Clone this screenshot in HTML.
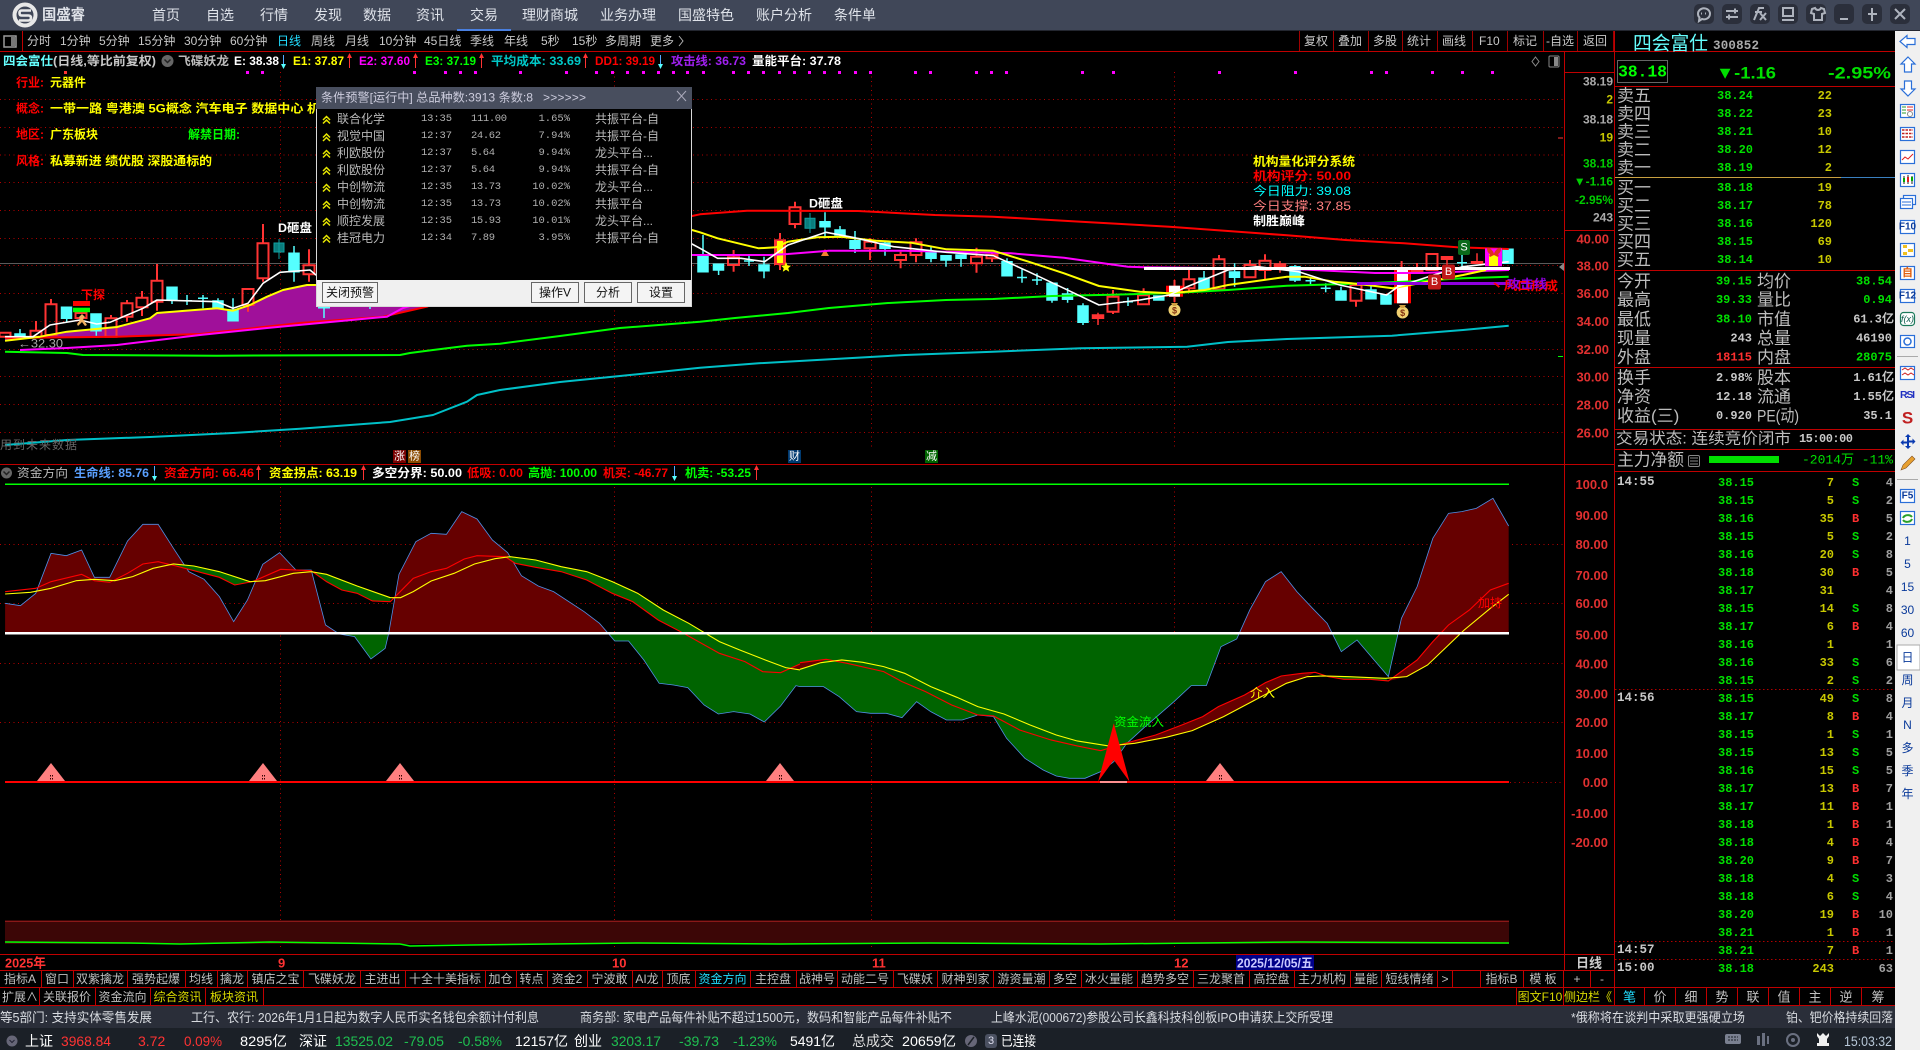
<!DOCTYPE html>
<html><head><meta charset="utf-8"><title>国盛睿</title>
<style>
html,body{margin:0;padding:0;background:#000;width:1920px;height:1050px;overflow:hidden}
svg{display:block;position:absolute;left:0;top:0}
text{font-family:"Liberation Sans","WenQuanYi Zen Hei","Noto Sans CJK SC",sans-serif;font-size:12px;dominant-baseline:central;fill:#c0c0c0}
.m{font-family:"Liberation Mono","WenQuanYi Zen Hei",monospace;font-weight:bold}
.b{font-weight:bold}
.e{text-anchor:end}.t{text-anchor:middle}
.nav{font-size:14px;fill:#dfe3ea}
.l{font-size:17px;fill:#bdbdbd}
.g{fill:#00e000}.y{fill:#c8c800}.r{fill:#ff3030}.w{fill:#c8c8c8}
.ax{font-size:13px;fill:#e03030;font-weight:bold;text-anchor:end}
.tk{font-size:13px;fill:#d8dbe0}
.st{font-size:14px}
.p{fill:#b8b8b8;font-size:12px}
.pm{font-family:"Liberation Mono",monospace;font-size:10.5px;fill:#b0b0b0}
.sb{fill:#0a3a9a;font-size:12px;text-anchor:middle}
.bx{fill:#fff;stroke:#3a7fe0;stroke-width:1}
.col{position:absolute;font:bold 12px/18px "Liberation Mono",monospace;white-space:pre;top:474px}
</style></head><body>
<svg width="1920" height="1050" viewBox="0 0 1920 1050">
<defs>
<linearGradient id="fz" gradientUnits="userSpaceOnUse" x1="0" y1="0" x2="0" y2="1020"><stop offset=".5088" stop-color="#660000"/><stop offset=".5088" stop-color="#006400"/></linearGradient>
</defs>
<rect width="1920" height="1050" fill="#000"/>

<!-- top bar -->
<rect width="1920" height="30" fill="#404758"/>
<rect y="30" width="1920" height="1" fill="#23262f"/>
<rect x="457" y="29" width="54" height="2" fill="#4a80e0"/>
<circle cx="25" cy="15" r="10.5" fill="none" stroke="#e8e8e8" stroke-width="4"/>
<path d="M31 10.5H21.5Q19.500 10.500 19.500 13T21.500 15.500H28.500Q31 15.500 31 18T28.500 20.500H19" fill="none" stroke="#e8e8e8" stroke-width="2.600"/>
<text x="42" y="15" class="b" style="font-size:15px;fill:#dfe2e8" textLength="43" lengthAdjust="spacingAndGlyphs">国盛睿</text>
<text x="152" y="15" class="nav">首页</text><text x="206" y="15" class="nav">自选</text><text x="260" y="15" class="nav">行情</text><text x="314" y="15" class="nav">发现</text><text x="363" y="15" class="nav">数据</text><text x="416" y="15" class="nav">资讯</text><text x="470" y="15" class="nav">交易</text><text x="522" y="15" class="nav">理财商城</text><text x="600" y="15" class="nav">业务办理</text><text x="678" y="15" class="nav">国盛特色</text><text x="756" y="15" class="nav">账户分析</text><text x="834" y="15" class="nav">条件单</text>
<!-- top-right buttons -->
<g fill="#2b2f3b"><rect x="1694" y="4" width="20" height="20" rx="5"/><rect x="1722" y="4" width="20" height="20" rx="5"/><rect x="1750" y="4" width="20" height="20" rx="5"/><rect x="1778" y="4" width="20" height="20" rx="5"/><rect x="1806" y="4" width="20" height="20" rx="5"/><rect x="1834" y="4" width="20" height="20" rx="5"/><rect x="1862" y="4" width="20" height="20" rx="5"/><rect x="1890" y="4" width="20" height="20" rx="5"/></g>
<g fill="none" stroke="#aeb3bd" stroke-width="2">
<path d="M1698 14a6 5.500 0 1 1 4 5l-3 2 .5-3.500Q1698 16 1698 14Z"/><path d="M1701 13.500h1M1705 13.500h1" />
<path d="M1726 11h12M1726 17h12M1735 8.500v5M1729 14.500v5"/>
<path d="M1754 20l5-12h5M1755 12h7M1760 13l6 7M1766 13l-6 7"/>
<path d="M1783 8h10v8h-10zM1782 20h12"/>
<path d="M1812 9l3-1q1 2 3 2t3-2l3 1 1 4-3 1v6h-8v-6l-3-1z"/>
<path d="M1840 19h8"/>
<path d="M1868 14h4v-6M1872 14v6h-1M1872 14h5"/>
<path d="M1895 9l10 10M1905 9l-10 10"/>
</g>

<!-- period toolbar -->
<rect x="4" y="36" width="12" height="11" fill="none" stroke="#9a9a9a" stroke-width="1.500"/><rect x="11" y="37" width="4" height="9" fill="#777"/>
<rect x="22" y="31" width="1" height="20" fill="#c00000"/>
<g fill="#b8b8b8">
<text x="27" y="41" class="w">分时</text><text x="60" y="41" class="w">1分钟</text><text x="99" y="41" class="w">5分钟</text><text x="138" y="41" class="w">15分钟</text><text x="184" y="41" class="w">30分钟</text><text x="230" y="41" class="w">60分钟</text><text x="277" y="41" style="fill:#22ddff">日线</text><text x="311" y="41" class="w">周线</text><text x="345" y="41" class="w">月线</text><text x="379" y="41" class="w">10分钟</text><text x="424" y="41" class="w">45日线</text><text x="470" y="41" class="w">季线</text><text x="504" y="41" class="w">年线</text><text x="541" y="41" class="w">5秒</text><text x="572" y="41" class="w">15秒</text><text x="605" y="41" class="w">多周期</text><text x="650" y="41" class="w">更多</text></g>
<path d="M679 36l4 5-4 5" fill="none" stroke="#b0b0b0"/>
<path d="M1299.500 31v20M1333.500 31v20M1368.500 31v20M1402.500 31v20M1437.500 31v20M1472.500 31v20M1507.500 31v20M1543.500 31v20M1577.500 31v20M1613.500 31v20" stroke="#a00000"/>
<text x="1304" y="41" class="w">复权</text><text x="1338" y="41" class="w">叠加</text><text x="1373" y="41" class="w">多股</text><text x="1407" y="41" class="w">统计</text><text x="1442" y="41" class="w">画线</text><text x="1479" y="41" class="w">F10</text><text x="1513" y="41" class="w">标记</text><text x="1546" y="41" class="w">-自选</text><text x="1583" y="41" class="w">返回</text>
<rect x="0" y="51" width="1895" height="1" fill="#c00000"/>

<!-- top panel grid -->
<g stroke="#b00000" stroke-dasharray="1 3.500" fill="none">
<path d="M0 99.500H1564M0 127.500H1564M0 155H1564M0 182.500H1564M0 210.500H1564M0 238.500H1564M0 265.500H1564M0 293.500H1564M0 321.500H1564M0 349.500H1564M0 376.500H1564M0 404.500H1564M0 432.500H1564"/>
<path d="M280.500 72V450M614.500 72V450M871.500 72V450M1174.500 72V450"/>
<path d="M0 544.500H1564M0 603.500H1564M0 663.500H1564M0 722.500H1564M1510 782.500H1564"/>
<path d="M280.500 487V950M614.500 487V950M871.500 487V950M1174.500 487V950"/>
</g>
<rect x="0" y="263" width="1564" height="1" fill="#5a5a5a"/>

<!-- magenta dots -->
<g fill="#f0f">
<rect x="64" y="71" width="3" height="3" fill="#f33"/><rect x="246" y="71" width="3" height="3"/><rect x="261" y="71" width="3" height="3"/><rect x="413" y="71" width="3" height="3"/><rect x="444" y="71" width="3" height="3"/><rect x="459" y="71" width="3" height="3"/><rect x="474" y="71" width="3" height="3"/><rect x="519" y="71" width="3" height="3"/><rect x="565" y="71" width="3" height="3"/><rect x="595" y="71" width="3" height="3"/><rect x="611" y="71" width="3" height="3"/><rect x="626" y="71" width="3" height="3"/><rect x="642" y="71" width="3" height="3"/><rect x="657" y="71" width="3" height="3"/><rect x="672" y="71" width="3" height="3"/><rect x="686" y="71" width="3" height="3"/>
<rect x="702" y="71" width="3" height="3"/><rect x="732" y="71" width="3" height="3"/><rect x="747" y="71" width="3" height="3"/><rect x="762" y="71" width="3" height="3"/><rect x="778" y="71" width="3" height="3"/><rect x="793" y="71" width="3" height="3"/><rect x="808" y="71" width="3" height="3"/><rect x="823" y="71" width="3" height="3"/><rect x="838" y="71" width="3" height="3"/><rect x="854" y="71" width="3" height="3"/><rect x="869" y="71" width="3" height="3"/><rect x="914" y="71" width="3" height="3"/><rect x="929" y="71" width="3" height="3"/><rect x="975" y="71" width="3" height="3"/><rect x="990" y="71" width="3" height="3"/><rect x="1005" y="71" width="3" height="3"/><rect x="1081" y="71" width="3" height="3"/><rect x="1112" y="71" width="3" height="3"/><rect x="1218" y="71" width="3" height="3"/><rect x="1294" y="71" width="3" height="3"/><rect x="1370" y="71" width="3" height="3"/><rect x="1385" y="71" width="3" height="3"/><rect x="1431" y="71" width="3" height="3"/><rect x="1461" y="71" width="3" height="3"/><rect x="1491" y="71" width="3" height="3"/>
</g>

<!-- purple fill -->
<polygon fill="#a0109a" points="5,340.700 40,336.700 67,331.700 117,327 150,318.300 157,313 217,308.300 233,310.700 250,305 267,296.700 283,290 307,285 316,285 360,285 428,306.700 383,316.700 300,323 200,334 117,336.700 5,338"/>

<!-- candles: red hollow -->
<path fill="none" stroke="#f33" stroke-width="2" d="M-.5 332.700H10.500V336.700H-.5ZM36 321V330.700M30.500 330.700H41.500V336.700H30.500ZM51 299V304.300M45.500 304.300H56.500V335H45.500ZM81 309V313M75.500 313H86.500V318H75.500ZM111 315V318.300M105.500 318.300H116.500V336.700H105.500ZM127 300V303.300M127 316.700V321.700M121.500 303.300H132.500V316.700H121.500ZM142 291V297.700M142 307.300V316M136.500 297.700H147.500V307.300H136.500ZM157 264V280.700M157 301.700V310.700M151.500 280.700H162.500V301.700H151.500ZM248 305V311.700M242.500 289H253.500V305H242.500ZM263 224V243.300M263 278.300V281.700M257.500 243.300H268.500V278.300H257.500ZM309 249.300V265.300M309 274.300V281.700M303.500 265.300H314.500V274.300H303.500ZM733.600 250V257.300M733.600 265V271.700M728 257.300H739V265H728ZM795 201.700V207.300M795 224V228.300M789.500 207.300H800.500V224H789.500ZM870 238.300V241.700M870 248.300V260M864.500 241.700H875.500V248.300H864.500ZM900.600 251.700V255M900.600 260V268.300M895 255H906V260H895ZM916 238.300V242.300M916 255V262.300M910.500 242.300H921.500V255H910.500ZM976.500 247.700V256.700M976.500 263.300V272.700M971 256.700H982V263.300H971ZM992 253V255M992 258.300V262M986.500 255H997.500V258.300H986.500ZM1113 290V296.700M1113 311.700V314M1107.500 296.700H1118.500V311.700H1107.500ZM1143.600 288.300V295.300M1138 295.300H1149V304.300H1138ZM1189 270V279.300M1189 288.300V293M1183.500 279.300H1194.500V288.300H1183.500ZM1219 255V259.300M1213.500 259.300H1224.500V289.300H1213.500ZM1250 260V265M1244.500 265H1255.500V277.300H1244.500ZM1265 254.300V260.700M1265 270V280M1259.500 260.700H1270.500V270H1259.500ZM1356 300.700V306.700M1350.500 285H1361.500V300.700H1350.500ZM1417 263V271M1411.500 271H1422.500V273H1411.500ZM1426.500 254H1437.500V270H1426.500ZM1174.500 280V286M1174.500 297V302M1401.600 261V270"/>
<path fill="#f33" stroke="#f33" stroke-width="1.500" d="M1092.500 315H1103.500V318.300H1092.500ZM1098 312.700V325M1274.500 264H1285.500V267.300H1274.500ZM1280 261V272.700M1441.500 256.700H1452.500V259.300H1441.500ZM1447 256V270M1471.500 261.700H1482.500V263.300H1471.500ZM1477 253.300V263"/>
<!-- candles: cyan -->
<path fill="#55ffff" stroke="#55ffff" stroke-width="1.500" d="M20 329V334M15 334H25V338H15ZM66.700 318.300V322M61.500 307.300H71.500V318.300H61.500ZM96.300 330.700V335.700M91 314H101V330.700H91ZM172 299.300V304M167 287.300H177V299.300H167ZM187 295V305M182 300.700H192M203 295V308.300M198 298.300H208M218 298.300V301M213 301H223V308.300H213ZM233 298.300V310M228 310H238V320.700H228ZM294 246V253.300M294 271.700V281.700M289 253.300H299V271.700H289ZM324 307V318M318 307.700H330M370 306V309M703 235V256.700M698 256.700H708V271.700H698ZM718.600 270V275M713.500 264.300H723.500V270H713.500ZM749 256V266M744 261H754M764 256.700V265M764 270.700V278.300M759 265H769V270.700H759ZM825 212.300V221.700M825 226.700V238.300M820 221.700H830V226.700H820ZM840 226V230M840 235V238M835 230H845V235H835ZM855 231V240.700M855 248.300V253M850 240.700H860V248.300H850ZM885 241.700V243.300M885 248.300V255.700M880 243.300H890V248.300H880ZM931 246.700V251.700M931 258.300V262.300M926 251.700H936V258.300H926ZM946 260V266.700M941 255.700H951V260H941ZM961 258.300V266.700M956 255H966V258.300H956ZM1007 258.300V261.700M1002 261.700H1012V275.700H1002ZM1022 269.300V282.700M1017 277.500H1027M1037 273.300V285M1032 280H1042M1052 300V302.700M1047 283.300H1057V300H1047ZM1067.600 288V294M1067.600 299.300V302.700M1062.500 294H1072.500V299.300H1062.500ZM1083 303.300V306M1083 322.300V325M1078 306H1088V322.300H1078ZM1128 297.300V306M1123 301.700H1133M1153.800 296H1163.800V300H1153.800ZM1204 271V278.300M1199 278.300H1209V290H1199ZM1234.600 263.300V272M1234.600 277.300V286.700M1229.500 272H1239.500V277.300H1229.500ZM1295 265V266.700M1295 280V282M1290 266.700H1300V280H1290ZM1310.500 277.300V285M1305.500 280.700H1315.500M1325.700 283.300V292.300M1320.700 288.300H1330.700M1341 286.700V291M1336 291H1346V300H1336ZM1371 285V290M1366 290H1376V298.700H1366ZM1381 295H1391V304H1381ZM1462 250V266.700M1457 262.700H1467M1503 249.300H1513V263.300H1503Z"/>
<path fill="#0a7c7c" stroke="#0fa0a0" d="M279 239V259M274 243H284V252H274ZM810 213V233M805 218.300H815V228.300H805Z"/>

<!-- big special candles -->
<rect x="1166" y="285.700" width="17" height="11" fill="#f00"/><rect x="1169" y="285.700" width="11" height="11" fill="#fff"/>
<rect x="1394" y="269.300" width="17" height="34" fill="#f00"/><rect x="1397" y="269.300" width="11" height="34" fill="#fff"/>
<rect x="774" y="239.300" width="12" height="25.700" fill="#f33"/><rect x="777" y="241" width="6" height="22" fill="#ff0"/>
<path d="M780 233V239M780 265V270" stroke="#f33" stroke-width="2"/>
<path d="M786 262l1.500 3.500 3.500.3-2.700 2.300.9 3.600-3.200-2-3.200 2 .9-3.600-2.700-2.300 3.500-.3z" fill="#ff0"/>
<path d="M825 249l4 7h-8z" fill="#f08030"/>

<!-- MAs -->
<g fill="none" stroke-linejoin="round">
<polyline stroke="#f00" stroke-width="2" points="5,338 117,336.700 200,334 300,323 383,316.700 427,306.700 500,270 560,240 620,225 692,216 700,214.300 747,210.700 858,211 935,215 993,216.700 1081,221.700 1169.500,226.700 1228,231 1287,235.300 1345.500,240 1404,243.300 1457,247.300 1508.700,249"/>
<polyline stroke="#f0f" stroke-width="2" points="20,350 67,348 117,345 200,335 267,328 333,321.700 387,316.700 403,308 500,280 600,262 692,255 770,255 788,254 829,250.700 905,250.700 1011,253.300 1064,257.700 1128,266.700 1146,267.300 1293,269 1375,273 1421,273 1509,270"/>
<polyline stroke="#0f0" stroke-width="2" points="5,351.700 67,353 83,355 217,355.700 400,355 410,353 433,350 467,345.700 500,343.700 560,336 620,328 700,321.700 735,318 788,313 829,308 888,303 946,300 993,299 1052,296 1111,294.700 1169.500,293.300 1228,290 1287,285.700 1345.500,284 1404,281.700 1463,278.300 1508.700,276.700"/>
<polyline stroke="#00c0c8" stroke-width="2" points="5,445 67,440 150,437 233,433 300,428.700 390,422 433,415 467,401.700 477,395 500,390 560,382 620,376 700,367.700 758.700,363.300 817,360 905,355 993,351.700 1081,348.300 1187,346.700 1228,342 1287,339 1392,335.700 1463,330 1508.700,325.700"/>
<polyline stroke="#ff0" stroke-width="2" points="5,340.700 40,336.700 67,331.700 117,327 150,318.300 157,313 217,308.300 233,310.700 250,305 267,296.700 283,290 307,285 316,285 692,230 700,232.300 717.600,238.300 758.700,248.300 776,247.300 788,241.700 817,237.300 841,236.700 876,240.700 911,242.700 946.500,249.300 993,250.700 1028.600,261.700 1064,273.300 1099,286 1140,291.700 1169.500,293.300 1204.700,290 1228,285 1287,276.700 1304.500,276.700 1334,281.700 1351.400,283.300 1375,286 1392.500,288.300 1463,275 1486,270"/>
<polyline stroke="#fff" stroke-width="1.600" points="5,336.700 33,336.700 50,325 80,320 96.700,324 110,322.300 143,308.300 157,300 217,301.700 233,308.300 248,303.300 263,283.300 280,272.300 310,270 316,275 692,244 700,248.300 717.600,258.300 741,258.300 764.600,261.700 788,245 826,232.300 852.600,237.300 893.600,246.700 946.500,252.300 993.400,255.700 1028.600,271.700 1064,288.300 1099,305 1140,300 1169.500,295 1187,286.700 1228,270 1257.500,266.700 1298.600,271.700 1339.700,285 1386.600,295 1398,286.700 1433.600,275 1463,266.700 1508.700,261.700"/>
</g>
<rect x="1144" y="267" width="366" height="3" fill="#fff"/>
<rect x="1357" y="282" width="153" height="3" fill="#9000e0"/>
<rect x="1485" y="248.300" width="17" height="18" fill="#f0f"/><rect x="1489" y="254" width="9" height="12" fill="#ff0"/>
<path d="M1494 254c-1-4-5-7-7-6 0 3 1 5 3 6-1 1-1 2 0 3l4-2 4 2c1-1 1-2 0-3 2-1 3-3 3-6-2-1-6 2-7 6z" fill="#e03020"/>
<!-- tags -->
<rect x="1458" y="240" width="12" height="15" rx="2" fill="#0a6a1a"/><text x="1464" y="247.500" class="t" style="fill:#fff;font-size:11px">S</text>
<rect x="1442" y="264.500" width="13" height="15" rx="2" fill="#c01818"/><text x="1448.500" y="272" class="t" style="fill:#fff;font-size:11px">B</text>
<rect x="1428" y="274.500" width="13" height="15" rx="2" fill="#c01818"/><text x="1434.500" y="282" class="t" style="fill:#fff;font-size:11px">B</text>
<circle cx="1174.500" cy="310" r="6" fill="#f0d070"/><path d="M1171 303h7l-2 3h-3z" fill="#d0a040"/><text x="1174.500" y="310.500" class="t" style="fill:#803010;font-size:9px;font-weight:bold">$</text>
<circle cx="1402.600" cy="312.500" r="6" fill="#f0d070"/><path d="M1399 305h7l-2 3h-3z" fill="#d0a040"/><text x="1402.600" y="313" class="t" style="fill:#803010;font-size:9px;font-weight:bold">$</text>
<text x="278" y="228" class="b" style="fill:#fff" textLength="34" lengthAdjust="spacingAndGlyphs">D砸盘</text>
<text x="809" y="203.500" class="b" style="fill:#fff" textLength="34" lengthAdjust="spacingAndGlyphs">D砸盘</text>
<text x="81" y="295" class="b" style="fill:#f00">下探</text>
<rect x="73" y="301" width="17" height="5" fill="#f00"/><rect x="73" y="307.700" width="17" height="4.500" fill="#0f0"/>
<path d="M82 314l3 3-2 2 4 6-2 1-3-4-4 4-1-2 3-4-1-3z" fill="#f0b060"/>
<text x="18" y="343.500" style="fill:#aaa" textLength="45" lengthAdjust="spacingAndGlyphs">←32.30</text>
<text x="0" y="445" style="fill:#666" textLength="77" lengthAdjust="spacing">用到未来数据</text>
<rect x="393" y="450" width="13" height="13" fill="#7a0000"/><text x="399.500" y="456.500" class="t" style="fill:#fff;font-size:11px">涨</text>
<rect x="408" y="450" width="13" height="13" fill="#8a4a00"/><text x="414.500" y="456.500" class="t" style="fill:#fff;font-size:11px">榜</text>
<rect x="788" y="450" width="13" height="13" fill="#003a70"/><text x="794.500" y="456.500" class="t" style="fill:#fff;font-size:11px">财</text>
<rect x="925" y="450" width="13" height="13" fill="#006400"/><text x="931.500" y="456.500" class="t" style="fill:#fff;font-size:11px">减</text>
<text x="1490" y="286" class="b" style="fill:#f00" textLength="68" lengthAdjust="spacingAndGlyphs">丶风口形成</text>
<text x="1507" y="284" class="b" style="fill:#9000e0" textLength="40" lengthAdjust="spacingAndGlyphs">攻击线</text>

<!-- left info -->
<text x="16" y="82.500" class="b" style="fill:#f00">行业:</text><text x="50" y="82.500" class="b" style="fill:#ff0">元器件</text>
<text x="16" y="108.500" class="b" style="fill:#f00">概念:</text><text x="50" y="108.500" class="b" style="fill:#ff0" textLength="270" lengthAdjust="spacingAndGlyphs">一带一路 粤港澳 5G概念 汽车电子 数据中心 机</text>
<text x="16" y="134.500" class="b" style="fill:#f00">地区:</text><text x="50" y="134.500" class="b" style="fill:#ff0">广东板块</text>
<text x="188" y="134.500" class="b" style="fill:#0f0">解禁日期:</text>
<text x="16" y="161" class="b" style="fill:#f00">风格:</text><text x="50" y="161" class="b" style="fill:#ff0" textLength="162" lengthAdjust="spacingAndGlyphs">私募新进 绩优股 深股通标的</text>

<!-- top info row -->
<text x="3" y="61" class="b" textLength="50" lengthAdjust="spacingAndGlyphs" style="fill:#66ffff">四会富仕</text>
<text x="53" y="61" class="b" textLength="103" lengthAdjust="spacingAndGlyphs" style="fill:#c8c8c8">(日线,等比前复权)</text>
<circle cx="167.500" cy="61" r="6" fill="#666"/><path d="M164.500 59.500l3 3 3-3" fill="none" stroke="#222" stroke-width="1.500"/>
<text x="178" y="61" class="b" textLength="51" lengthAdjust="spacingAndGlyphs" style="fill:#bbb">飞碟妖龙</text>
<text x="234" y="61" class="b" textLength="45" lengthAdjust="spacingAndGlyphs" style="fill:#fff">E: 38.38</text>
<path d="M283.500 55v11" stroke="#5af" /><path d="M281 64h5l-2.500 5z" fill="#5ff"/>
<text x="293" y="61" class="b" textLength="51" lengthAdjust="spacingAndGlyphs" style="fill:#ff0">E1: 37.87</text>
<path d="M349.500 57v11" stroke="#f33"/><path d="M347 58h5l-2.500-5z" fill="#f33"/>
<text x="359" y="61" class="b" textLength="51" lengthAdjust="spacingAndGlyphs" style="fill:#f0f">E2: 37.60</text>
<path d="M415.500 57v11" stroke="#f33"/><path d="M413 58h5l-2.500-5z" fill="#f33"/>
<text x="425" y="61" class="b" textLength="51" lengthAdjust="spacingAndGlyphs" style="fill:#0f0">E3: 37.19</text>
<path d="M481.500 57v11" stroke="#f33"/><path d="M479 58h5l-2.500-5z" fill="#f33"/>
<text x="491" y="61" class="b" textLength="90" lengthAdjust="spacingAndGlyphs" style="fill:#00c8c8">平均成本: 33.69</text>
<path d="M585.500 57v11" stroke="#f33"/><path d="M583 58h5l-2.500-5z" fill="#f33"/>
<text x="595" y="61" class="b" textLength="60" lengthAdjust="spacingAndGlyphs" style="fill:#f00">DD1: 39.19</text>
<path d="M660.500 55v11" stroke="#5af"/><path d="M658 64h5l-2.500 5z" fill="#5ff"/>
<text x="671" y="61" class="b" textLength="75" lengthAdjust="spacingAndGlyphs" style="fill:#a020f0">攻击线: 36.73</text>
<text x="752" y="61" class="b" textLength="89" lengthAdjust="spacingAndGlyphs" style="fill:#fff">量能平台: 37.78</text>
<path d="M1535.500 57l3.500 4.500-3.500 4.500-3.500-4.500z" fill="none" stroke="#888"/>
<rect x="1549" y="56" width="10" height="11" rx="1" fill="none" stroke="#888"/><rect x="1554" y="57" width="4" height="9" fill="#888"/>
<text x="1253" y="161.500" class="b" style="fill:#ff0" textLength="102" lengthAdjust="spacingAndGlyphs">机构量化评分系统</text>
<text x="1253" y="176" class="b" style="fill:#f00" textLength="98" lengthAdjust="spacingAndGlyphs">机构评分:  50.00</text>
<text x="1253" y="191" style="fill:#0ff" textLength="98" lengthAdjust="spacingAndGlyphs">今日阻力:  39.08</text>
<text x="1253" y="206" style="fill:#ff8080" textLength="98" lengthAdjust="spacingAndGlyphs">今日支撑:  37.85</text>
<text x="1253" y="221" class="b" style="fill:#fff" textLength="52" lengthAdjust="spacingAndGlyphs">制胜巅峰</text>

<!-- top axis -->
<rect x="1564" y="51" width="1" height="919" fill="#c00000"/>
<rect x="1564" y="72" width="50" height="1" fill="#c00000"/><rect x="1564" y="230" width="50" height="1" fill="#c00000"/>
<g style="font-size:13px">
<text x="1613" y="81.500" class="e b" style="fill:#aaa">38.19</text><text x="1613" y="99.500" class="e b" style="fill:#c8c800">2</text><text x="1613" y="119.500" class="e b" style="fill:#aaa">38.18</text><text x="1613" y="137.500" class="e b" style="fill:#c8c800">19</text><text x="1613" y="163.500" class="e b" style="fill:#0c0">38.18</text><text x="1613" y="181.500" class="e b" style="fill:#0c0">▼-1.16</text><text x="1613" y="200" class="e b" style="fill:#0c0">-2.95%</text><text x="1613" y="217.500" class="e b" style="fill:#aaa">243</text></g>
<text x="1609" y="239" class="ax">40.00</text><text x="1609" y="266" class="ax">38.00</text><text x="1609" y="293.500" class="ax">36.00</text><text x="1609" y="321.500" class="ax">34.00</text><text x="1609" y="349.500" class="ax">32.00</text><text x="1609" y="377" class="ax">30.00</text><text x="1609" y="405" class="ax">28.00</text><text x="1609" y="433" class="ax">26.00</text>
<path d="M1558 138h5" stroke="#f33"/><path d="M1558 356.500h5" stroke="#0f0"/><path d="M1564 263l-5 4 5 4z" fill="#888"/>

<!-- panel separator -->
<rect x="0" y="464" width="1614" height="1" fill="#c00000"/>

<!-- lower title -->
<circle cx="6.500" cy="473" r="5.500" fill="#666"/><path d="M3.500 471.500l3 3 3-3" fill="none" stroke="#222" stroke-width="1.500"/>
<text x="17" y="473" textLength="51" lengthAdjust="spacingAndGlyphs" style="fill:#bbb">资金方向</text>
<text x="74" y="473" class="b" textLength="75" lengthAdjust="spacingAndGlyphs" style="fill:#5aa0ff">生命线: 85.76</text>
<path d="M154.500 466v11" stroke="#5af"/><path d="M152 476h5l-2.500 5z" fill="#5ff"/>
<text x="164" y="473" class="b" textLength="90" lengthAdjust="spacingAndGlyphs" style="fill:#f00">资金方向: 66.46</text>
<path d="M258.500 469v11" stroke="#f33"/><path d="M256 470h5l-2.500-5z" fill="#f33"/>
<text x="269" y="473" class="b" textLength="88" lengthAdjust="spacingAndGlyphs" style="fill:#ff0">资金拐点: 63.19</text>
<path d="M363.500 469v11" stroke="#f33"/><path d="M361 470h5l-2.500-5z" fill="#f33"/>
<text x="372" y="473" class="b" textLength="90" lengthAdjust="spacingAndGlyphs" style="fill:#fff">多空分界: 50.00</text>
<text x="467" y="473" class="b" textLength="56" lengthAdjust="spacingAndGlyphs" style="fill:#f00">低吸: 0.00</text>
<text x="528" y="473" class="b" textLength="69" lengthAdjust="spacingAndGlyphs" style="fill:#0f0">高抛: 100.00</text>
<text x="603" y="473" class="b" textLength="65" lengthAdjust="spacingAndGlyphs" style="fill:#f00">机买: -46.77</text>
<path d="M674.500 466v11" stroke="#5af"/><path d="M672 476h5l-2.500 5z" fill="#5ff"/>
<text x="685" y="473" class="b" textLength="66" lengthAdjust="spacingAndGlyphs" style="fill:#0f0">机卖: -53.25</text>
<path d="M756.500 469v11" stroke="#f33"/><path d="M754 470h5l-2.500-5z" fill="#f33"/>

<!-- lower chart (coords from sampled scale) -->
<g transform="translate(0 460) scale(.5102 .3333)">
<polygon fill="url(#fz)" points="10,519 10,430 40,437 70,400 100,280 130,287 160,270 185,352 215,352 250,243 280,193 310,193 340,265 370,335 400,358 430,410 458,485 485,420 515,313 548,278 580,330 610,330 638,495 665,522 695,530 727,597 755,565 762,519 782,343 815,245 845,220 875,223 905,155 935,177 965,240 995,278 1022,347 1055,378 1085,395 1145,455 1175,490 1205,543 1232,543 1262,600 1292,670 1320,675 1348,683 1380,735 1408,762 1438,755 1470,762 1498,786 1530,738 1560,677 1568,680 1568,519"/>
<polyline fill="none" stroke="#5090e8" vector-effect="non-scaling-stroke" stroke-width=".8" points="10,430 40,437 70,400 100,280 130,287 160,270 185,352 215,352 250,243 280,193 310,193 340,265 370,335 400,358 430,410 458,485 485,420 515,313 548,278 580,330 610,330 638,495 665,522 695,530 727,597 755,565 762,519 782,343 815,245 845,220 875,223 905,155 935,177 965,240 995,278 1022,347 1055,378 1085,395 1145,455 1175,490 1205,543 1232,543 1262,600 1292,670 1320,675 1348,683 1380,735 1408,762 1438,755 1470,762 1498,786 1530,738 1560,677 1568,680"/>
<!-- green bands -->
<g fill="#006400">
<polygon points="185,362 215,367 225,362 185,358"/>
<polygon points="340,312 380,318 430,335 490,365 460,375 430,352 400,340 345,318"/>
<polygon points="610,335 640,343 700,378 765,413 765,425 730,423 700,400 670,390 640,365"/>
<polygon points="990,290 1050,300 1100,320 1150,335 1200,365 1250,400 1300,450 1350,490 1410,545 1450,570 1500,600 1540,623 1495,635 1460,605 1410,580 1340,520 1290,480 1240,425 1200,400 1150,360 1100,335 1050,322 1010,310"/>
</g>
<polygon fill="#660000" points="1545,630 1568,612 1568,630"/>
<g fill="none">
<polyline stroke="#f00" stroke-width="1.100" vector-effect="non-scaling-stroke" points="10,395 70,385 100,365 160,343 185,362 215,367 250,340 280,312 310,305 345,318 400,340 430,352 460,375 495,365 550,328 610,332 640,365 670,390 700,400 730,423 765,425 810,355 845,335 875,325 910,297 935,287 990,290 1010,310 1050,322 1100,335 1150,360 1200,400 1240,425 1290,480 1340,520 1410,580 1460,605 1495,635 1530,638 1568,612"/>
<polyline stroke="#ff0" stroke-width="1.100" vector-effect="non-scaling-stroke" points="10,402 60,397 100,385 150,362 185,358 225,362 260,350 300,325 340,312 380,318 430,335 490,365 520,362 575,340 610,335 640,343 700,378 765,413 785,413 810,395 845,363 890,340 930,312 970,296 1000,290 1050,300 1100,320 1150,335 1200,365 1250,400 1300,450 1350,490 1410,545 1450,570 1500,600 1540,623 1568,630"/>
</g>
</g>
<g transform="translate(800 460) scale(.523 .3333)">
<polygon fill="url(#fz)" points="0,519 0,680 45,680 75,710 108,755 135,760 165,760 195,773 223,725 250,755 280,780 310,780 340,765 370,770 395,835 430,895 465,930 490,948 515,955 545,955 575,935 600,905 625,850 660,800 715,725 748,677 777,677 805,560 835,537 860,450 890,365 920,335 950,395 980,445 1008,490 1035,575 1065,540 1125,650 1150,475 1180,380 1210,235 1240,160 1265,155 1293,145 1325,115 1355,198 1355,519"/>
<polyline fill="none" stroke="#5090e8" stroke-width=".8" vector-effect="non-scaling-stroke" points="0,680 45,680 75,710 108,755 135,760 165,760 195,773 223,725 250,755 280,780 310,780 340,765 370,770 395,835 430,895 465,930 490,948 515,955 545,955 575,935 600,905 625,850 660,800 715,725 748,677 777,677 805,560 835,537 860,450 890,365 920,335 950,395 980,445 1008,490 1035,575 1065,540 1125,650 1150,475 1180,380 1210,235 1240,160 1265,155 1293,145 1325,115 1355,198"/>
<polygon fill="#660000" points="0,608 50,598 40,608 0,628"/>
<polygon fill="#660000" points="610,855 680,825 730,795 770,770 800,740 850,705 890,668 920,648 960,640 985,637 970,650 930,670 870,720 810,770 750,812 700,832 640,850 610,860"/>
<polygon fill="#006400" points="985,637 1010,650 1040,658 1090,658 1125,663 1120,655 1050,650 1000,648"/>
<polygon fill="#660000" points="1125,663 1180,600 1210,545 1240,495 1280,450 1320,390 1355,370 1355,403 1320,445 1270,510 1240,555 1200,615 1160,650"/>
<polyline fill="none" stroke="#f00" stroke-width="1.100" vector-effect="non-scaling-stroke" points="0,608 50,598 90,610 160,635 195,665 240,695 290,735 340,765 370,768 420,810 480,840 530,858 575,872 610,855 680,825 730,795 770,770 800,740 850,705 890,668 920,648 960,640 985,637 1010,650 1040,658 1090,658 1125,663 1180,600 1210,545 1240,495 1280,450 1320,390 1355,370"/>
<polyline fill="none" stroke="#ff0" stroke-width="1.100" vector-effect="non-scaling-stroke" points="0,628 40,608 80,600 120,607 160,620 200,640 250,680 300,712 340,740 390,762 440,795 490,825 530,843 590,858 640,850 700,832 750,812 810,770 870,720 930,670 970,650 1000,648 1050,650 1120,655 1160,650 1200,615 1240,555 1270,510 1320,445 1355,403"/>
<polygon fill="#f00" points="570,965 600,790 630,965 600,900"/>
</g>
<rect x="5" y="483.500" width="1504" height="1.500" fill="#0f0"/>
<rect x="5" y="632" width="1504" height="2.500" fill="#fff"/>
<rect x="5" y="781" width="1504" height="2" fill="#f00"/>
<rect x="1100" y="781" width="27" height="2" fill="#ff9090"/>
<g fill="#ff8080">
<polygon points="51,763 37,781 65,781"/><polygon points="263,763 249,781 277,781"/><polygon points="400,763 386,781 414,781"/><polygon points="780,763 766,781 794,781"/><polygon points="1220,763 1206,781 1234,781"/></g>
<g fill="#300"><rect x="50" y="775" width="1" height="1.500"/><rect x="52" y="775" width="1" height="1.500"/><rect x="50" y="778" width="1" height="1.500"/><rect x="52" y="778" width="1" height="1.500"/><rect x="262" y="775" width="1" height="1.500"/><rect x="264" y="775" width="1" height="1.500"/><rect x="262" y="778" width="1" height="1.500"/><rect x="264" y="778" width="1" height="1.500"/><rect x="399" y="775" width="1" height="1.500"/><rect x="401" y="775" width="1" height="1.500"/><rect x="399" y="778" width="1" height="1.500"/><rect x="401" y="778" width="1" height="1.500"/><rect x="779" y="775" width="1" height="1.500"/><rect x="781" y="775" width="1" height="1.500"/><rect x="779" y="778" width="1" height="1.500"/><rect x="781" y="778" width="1" height="1.500"/><rect x="1219" y="775" width="1" height="1.500"/><rect x="1221" y="775" width="1" height="1.500"/><rect x="1219" y="778" width="1" height="1.500"/><rect x="1221" y="778" width="1" height="1.500"/></g>
<text x="1114" y="722" style="fill:#0f0" textLength="50" lengthAdjust="spacingAndGlyphs">资金流入</text>
<text x="1250" y="693" style="fill:#ff0" textLength="25" lengthAdjust="spacingAndGlyphs">介入</text>
<text x="1478" y="603" style="fill:#f00" textLength="24" lengthAdjust="spacingAndGlyphs">加持</text>

<!-- lower axis -->
<text x="1608" y="484.500" class="ax">100.0</text><text x="1608" y="515.500" class="ax">90.00</text><text x="1608" y="544.500" class="ax">80.00</text><text x="1608" y="575.500" class="ax">70.00</text><text x="1608" y="603.500" class="ax">60.00</text><text x="1608" y="635" class="ax">50.00</text><text x="1608" y="664" class="ax">40.00</text><text x="1608" y="694" class="ax">30.00</text><text x="1608" y="722.500" class="ax">20.00</text><text x="1608" y="753.500" class="ax">10.00</text><text x="1608" y="782.500" class="ax">0.00</text><text x="1608" y="813.500" class="ax">-10.00</text><text x="1608" y="842.500" class="ax">-20.00</text>

<!-- volume-like band -->
<rect x="5" y="920" width="1504" height="24" fill="#3c0606"/>
<rect x="5" y="921" width="1504" height="1" fill="#8a1818"/>
<polyline fill="none" stroke="#0f0" stroke-width="1.500" points="5,942 130,943 180,944 270,942 400,944 410,946 470,945 640,943 780,944 930,943 1100,944 1300,942 1509,943"/>

<!-- date row -->
<rect x="0" y="954" width="1614" height="1" fill="#c00000"/>
<text x="5" y="963" class="b" style="fill:#f33;font-size:13px" textLength="41" lengthAdjust="spacingAndGlyphs">2025年</text>
<text x="278" y="963" class="b" style="fill:#f33;font-size:13px">9</text><text x="612" y="963" class="b" style="fill:#f33;font-size:13px">10</text><text x="872" y="963" class="b" style="fill:#f33;font-size:13px">11</text><text x="1174" y="963" class="b" style="fill:#f33;font-size:13px">12</text>
<rect x="1236" y="955" width="78" height="15" fill="#000088"/>
<text x="1237" y="963" class="b" style="fill:#c8c8ff;font-size:13px" textLength="76" lengthAdjust="spacingAndGlyphs">2025/12/05/五</text>
<text x="1589" y="963" class="t b" style="fill:#ccc;font-size:13px">日线</text>

<!-- tab rows -->
<rect x="0" y="970" width="1614" height="1" fill="#c00000"/><rect x="0" y="987" width="1614" height="1" fill="#c00000"/><rect x="0" y="1005" width="1895" height="1" fill="#c00000"/>
<path stroke="#c00000" d="M41.500 970v17M73.500 970v17M127.500 970v17M185.500 970v17M217.500 970v17M247.500 970v17M303.500 970v17M360.500 970v17M405.500 970v17M485.500 970v17M516.500 970v17M547.500 970v17M587.500 970v17M632.500 970v17M662.500 970v17M695.500 970v17M750.500 970v17M796.500 970v17M837.500 970v17M893.500 970v17M937.500 970v17M993.500 970v17M1049.500 970v17M1081.500 970v17M1137.500 970v17M1193.500 970v17M1249.500 970v17M1294.500 970v17M1350.500 970v17M1381.500 970v17M1437.500 970v17M1452.500 970v17M1480.500 970v17M1523.500 970v17M1563.500 970v17M1590.500 970v17M39.500 987v18M95.500 987v18M150.500 987v18M205.500 987v18M263.500 987v18M1516.500 987v18M1563.500 987v18"/>
<g class="tabs">
<text x="20" y="979" class="t">指标A</text><text x="57" y="979" class="t">窗口</text><text x="100" y="979" class="t">双紫擒龙</text><text x="156" y="979" class="t">强势起爆</text><text x="201" y="979" class="t">均线</text><text x="232" y="979" class="t">擒龙</text><text x="275.500" y="979" class="t">镇店之宝</text><text x="332" y="979" class="t">飞碟妖龙</text><text x="382.500" y="979" class="t">主进出</text><text x="445" y="979" class="t">十全十美指标</text><text x="500.500" y="979" class="t">加仓</text><text x="531.500" y="979" class="t">转点</text><text x="567" y="979" class="t">资金2</text><text x="609.500" y="979" class="t">宁波敢</text><text x="647" y="979" class="t">AI龙</text><text x="678.500" y="979" class="t">顶底</text><text x="722.500" y="979" class="t" style="fill:#22ddff">资金方向</text><text x="773" y="979" class="t">主控盘</text><text x="817" y="979" class="t">战神号</text><text x="865" y="979" class="t">动能二号</text><text x="915" y="979" class="t">飞碟妖</text><text x="965.500" y="979" class="t">财神到家</text><text x="1021.500" y="979" class="t">游资量潮</text><text x="1065" y="979" class="t">多空</text><text x="1109" y="979" class="t">冰火量能</text><text x="1165" y="979" class="t">趋势多空</text><text x="1221" y="979" class="t">三龙聚首</text><text x="1271.500" y="979" class="t">高控盘</text><text x="1322" y="979" class="t">主力机构</text><text x="1366" y="979" class="t">量能</text><text x="1409.500" y="979" class="t">短线情绪</text><text x="1445" y="979" class="t">&gt;</text><text x="1501.500" y="979" class="t">指标B</text><text x="1543" y="979" class="t">模 板</text><text x="1577" y="979" class="t">+</text><text x="1602" y="979" class="t">-</text>
<text x="20" y="997" class="t">扩展∧</text><text x="67" y="997" class="t">关联报价</text><text x="122.500" y="997" class="t">资金流向</text><text x="177.500" y="997" class="t" style="fill:#d8d800">综合资讯</text><text x="234" y="997" class="t" style="fill:#d8d800">板块资讯</text><text x="1540" y="997" class="t" style="fill:#d8d800">图文F10</text><text x="1588" y="997" class="t" style="fill:#d8d800">侧边栏《</text>
</g>

<!-- ticker & status -->
<rect x="0" y="1006" width="1895" height="22" fill="#2a2e39"/>
<rect x="0" y="1028" width="1895" height="22" fill="#1b2027"/>
<text x="0" y="1017.500" class="tk" textLength="152" lengthAdjust="spacingAndGlyphs">等5部门: 支持实体零售发展</text>
<text x="191" y="1017.500" class="tk" textLength="348" lengthAdjust="spacingAndGlyphs">工行、农行: 2026年1月1日起为数字人民币实名钱包余额计付利息</text>
<text x="580" y="1017.500" class="tk" textLength="372" lengthAdjust="spacingAndGlyphs">商务部: 家电产品每件补贴不超过1500元，数码和智能产品每件补贴不</text>
<text x="991" y="1017.500" class="tk" textLength="342" lengthAdjust="spacingAndGlyphs">上峰水泥(000672)参股公司长鑫科技科创板IPO申请获上交所受理</text>
<text x="1571" y="1017.500" class="tk" textLength="174" lengthAdjust="spacingAndGlyphs">*俄称将在谈判中采取更强硬立场</text>
<text x="1786" y="1017.500" class="tk" textLength="107" lengthAdjust="spacingAndGlyphs">铂、钯价格持续回落</text>

<circle cx="12" cy="1041" r="5.500" fill="#667"/><path d="M9.500 1040l2.500 2.500 2.500-2.500" fill="none" stroke="#223"/>
<g>
<text x="25" y="1041" class="st" style="fill:#fff">上证</text><text x="61" y="1041" class="st" style="fill:#f33" textLength="50" lengthAdjust="spacingAndGlyphs">3968.84</text><text x="138" y="1041" class="st" style="fill:#f33">3.72</text><text x="184" y="1041" class="st" style="fill:#f33" textLength="38" lengthAdjust="spacingAndGlyphs">0.09%</text><text x="240" y="1041" class="st" style="fill:#fff" textLength="47" lengthAdjust="spacingAndGlyphs">8295亿</text>
<text x="299" y="1041" class="st" style="fill:#fff">深证</text><text x="335" y="1041" class="st" style="fill:#1fbf50" textLength="58" lengthAdjust="spacingAndGlyphs">13525.02</text><text x="404" y="1041" class="st" style="fill:#1fbf50" textLength="40" lengthAdjust="spacingAndGlyphs">-79.05</text><text x="458" y="1041" class="st" style="fill:#1fbf50" textLength="44" lengthAdjust="spacingAndGlyphs">-0.58%</text><text x="515" y="1041" class="st" style="fill:#fff" textLength="53" lengthAdjust="spacingAndGlyphs">12157亿</text>
<text x="574" y="1041" class="st" style="fill:#fff">创业</text><text x="611" y="1041" class="st" style="fill:#1fbf50" textLength="50" lengthAdjust="spacingAndGlyphs">3203.17</text><text x="679" y="1041" class="st" style="fill:#1fbf50" textLength="40" lengthAdjust="spacingAndGlyphs">-39.73</text><text x="733" y="1041" class="st" style="fill:#1fbf50" textLength="44" lengthAdjust="spacingAndGlyphs">-1.23%</text><text x="790" y="1041" class="st" style="fill:#fff" textLength="45" lengthAdjust="spacingAndGlyphs">5491亿</text>
<text x="852" y="1041" class="st" style="fill:#ddd">总成交</text><text x="902" y="1041" class="st" style="fill:#fff" textLength="54" lengthAdjust="spacingAndGlyphs">20659亿</text>
</g>
<circle cx="971" cy="1041" r="6" fill="#667"/><path d="M968 1045l6-8" stroke="#1b2027" stroke-width="1.500"/>
<rect x="985" y="1034" width="12" height="14" rx="3" fill="#4a5060"/><text x="991" y="1041" class="t" style="fill:#dde;font-size:11px">3</text>
<text x="1001" y="1041" class="st" style="fill:#fff" textLength="35" lengthAdjust="spacingAndGlyphs">已连接</text>
<!-- status icons -->
<rect x="1725" y="1034" width="16" height="10" rx="2" fill="#7a8090"/><path d="M1728 1037h10M1728 1040h10" stroke="#1b2027" stroke-dasharray="2 1"/>
<path d="M1757 1036h3v9h-3zM1762 1033h3v13h-3zM1767 1036h2v8h-2z" fill="#6a7080"/>
<circle cx="1793" cy="1040" r="6" fill="none" stroke="#6a7080" stroke-width="2"/><circle cx="1793" cy="1040" r="2" fill="#6a7080"/>
<path d="M1817 1033l3 3 3-3 3 3 3-3v3l-2 3v4h2v3h-12v-3h2v-4l-2-3z" fill="#f0f0f0"/>
<text x="1844" y="1041" class="st" style="fill:#b8c8d8" textLength="48" lengthAdjust="spacingAndGlyphs">15:03:32</text>

<!-- right quote panel -->
<rect x="1614" y="31" width="1" height="974" fill="#c00000"/>
<text x="1633" y="44" style="font-size:19px;fill:#66ffff" textLength="75" lengthAdjust="spacingAndGlyphs">四会富仕</text>
<text x="1713" y="46" class="m" style="fill:#aaa;font-size:12.500px" textLength="46">300852</text>
<rect x="1617.500" y="60.500" width="50" height="22" fill="none" stroke="#666"/>
<text x="1618" y="72" class="m" style="fill:#0f0;font-size:16.500px" textLength="49">38.18</text>
<text x="1716" y="73" class="b" style="fill:#00e000;font-size:17px" textLength="60" lengthAdjust="spacingAndGlyphs">▼-1.16</text>
<text x="1891" y="73" class="e b" style="fill:#00e000;font-size:17px" textLength="63" lengthAdjust="spacingAndGlyphs">-2.95%</text>
<rect x="1615" y="86" width="280" height="1" fill="#c00000"/>
<rect x="1615" y="177" width="226" height="1" fill="#c8a040"/><rect x="1841" y="177" width="54" height="1" fill="#3a80c0"/>
<rect x="1615" y="270" width="280" height="1" fill="#c00000"/><rect x="1615" y="367" width="280" height="1" fill="#c00000"/><rect x="1615" y="429" width="280" height="1" fill="#c00000"/><rect x="1615" y="449" width="280" height="1" fill="#c00000"/><rect x="1615" y="471" width="280" height="1" fill="#c00000"/>
<text x="1617" y="96" class="l">卖五</text><text x="1617" y="114" class="l">卖四</text><text x="1617" y="132" class="l">卖三</text><text x="1617" y="150" class="l">卖二</text><text x="1617" y="168" class="l">卖一</text>
<text x="1617" y="188" class="l">买一</text><text x="1617" y="206" class="l">买二</text><text x="1617" y="224" class="l">买三</text><text x="1617" y="242" class="l">买四</text><text x="1617" y="260" class="l">买五</text>
<g style="font-size:12px"><text x="1717" y="96" class="m g">38.24</text><text x="1717" y="114" class="m g">38.22</text><text x="1717" y="132" class="m g">38.21</text><text x="1717" y="150" class="m g">38.20</text><text x="1717" y="168" class="m g">38.19</text><text x="1717" y="188" class="m g">38.18</text><text x="1717" y="206" class="m g">38.17</text><text x="1717" y="224" class="m g">38.16</text><text x="1717" y="242" class="m g">38.15</text><text x="1717" y="260" class="m g">38.14</text>
<text x="1832" y="96" class="m y e">22</text><text x="1832" y="114" class="m y e">23</text><text x="1832" y="132" class="m y e">10</text><text x="1832" y="150" class="m y e">12</text><text x="1832" y="168" class="m y e">2</text><text x="1832" y="188" class="m y e">19</text><text x="1832" y="206" class="m y e">78</text><text x="1832" y="224" class="m y e">120</text><text x="1832" y="242" class="m y e">69</text><text x="1832" y="260" class="m y e">10</text>
</g>
<text x="1617" y="281.500" class="l">今开</text><text x="1617" y="300" class="l">最高</text><text x="1617" y="319.500" class="l">最低</text><text x="1617" y="338.500" class="l">现量</text><text x="1617" y="357.500" class="l">外盘</text>
<text x="1757" y="281.500" class="l">均价</text><text x="1757" y="300" class="l">量比</text><text x="1757" y="319.500" class="l">市值</text><text x="1757" y="338.500" class="l">总量</text><text x="1757" y="357.500" class="l">内盘</text>
<text x="1752" y="281.500" class="m g e">39.15</text><text x="1752" y="300" class="m g e">39.33</text><text x="1752" y="319.500" class="m g e">38.10</text><text x="1752" y="338.500" class="m w e">243</text><text x="1752" y="357.500" class="m e" style="fill:#ff3030">18115</text>
<text x="1892" y="281.500" class="m g e">38.54</text><text x="1892" y="300" class="m g e">0.94</text><text x="1894" y="319.500" class="m w e">61.3亿</text><text x="1892" y="338.500" class="m w e">46190</text><text x="1892" y="357.500" class="m g e">28075</text>
<text x="1617" y="378" class="l">换手</text><text x="1617" y="397" class="l">净资</text><text x="1617" y="416" class="l">收益(三)</text>
<text x="1757" y="378" class="l">股本</text><text x="1757" y="397" class="l">流通</text><text x="1757" y="416" class="l" textLength="42" lengthAdjust="spacingAndGlyphs">PE(动)</text>
<text x="1752" y="378" class="m w e">2.98%</text><text x="1752" y="397" class="m w e">12.18</text><text x="1752" y="416" class="m w e">0.920</text>
<text x="1894" y="378" class="m w e">1.61亿</text><text x="1894" y="397" class="m w e">1.55亿</text><text x="1892" y="416" class="m w e">35.1</text>
<text x="1616" y="439" style="font-size:15.500px;fill:#bdbdbd" textLength="175" lengthAdjust="spacingAndGlyphs">交易状态: 连续竞价闭市</text>
<text x="1799" y="439" class="m w" textLength="54">15:00:00</text>
<text x="1617" y="460" class="l" textLength="67" lengthAdjust="spacingAndGlyphs">主力净额</text>
<rect x="1688.500" y="455.500" width="11" height="11" rx="1.500" fill="none" stroke="#888"/><path d="M1690 458h8M1690 461h8M1690 464h8" stroke="#888"/>
<rect x="1709" y="456" width="70" height="7" fill="#00e000"/>
<text x="1802" y="460" class="m g" style="font-weight:normal;font-size:13px" textLength="52" lengthAdjust="spacingAndGlyphs">-2014万</text>
<text x="1893" y="460" class="m g e" style="font-weight:normal;font-size:13px">-11%</text>
<text x="1617" y="482" class="m w" style="font-size:12.500px">14:55</text><text x="1617" y="698" class="m w" style="font-size:12.500px">14:56</text><text x="1617" y="950" class="m w" style="font-size:12.500px">14:57</text><text x="1617" y="968" class="m w" style="font-size:12.500px">15:00</text>
<path d="M1615 689.500H1895M1615 941.500H1895M1615 959.500H1895" stroke="#b00000" stroke-dasharray="1.500 2.500"/>
<rect x="1615" y="987" width="280" height="1" fill="#c00000"/>
<path stroke="#c00000" d="M1644.500 987v18M1675.500 987v18M1706.500 987v18M1737.500 987v18M1768.500 987v18M1799.500 987v18M1830.500 987v18M1861.500 987v18"/>
<text x="1629.500" y="997" class="t" style="font-size:13px;fill:#22ddff">笔</text><text x="1660" y="997" class="t" style="font-size:13px">价</text><text x="1691" y="997" class="t" style="font-size:13px">细</text><text x="1722" y="997" class="t" style="font-size:13px">势</text><text x="1753" y="997" class="t" style="font-size:13px">联</text><text x="1784" y="997" class="t" style="font-size:13px">值</text><text x="1815" y="997" class="t" style="font-size:13px">主</text><text x="1846" y="997" class="t" style="font-size:13px">逆</text><text x="1878" y="997" class="t" style="font-size:13px">筹</text>

<!-- right sidebar -->
<rect x="1895" y="31" width="25" height="1019" fill="#f0f0f0"/>
<g fill="#fff" stroke="#2a6fd8" stroke-width="1.200">
<path d="M1900 41.500l7-6v3h8v6h-8v3z"/>
<path d="M1908 57l7 7h-3.500v8h-7v-8H1901z"/>
<path d="M1908 96l7-7h-3.500v-8h-7v8H1901z"/>
<rect x="1900.500" y="104.500" width="14" height="13"/><rect x="1900.500" y="127.500" width="14" height="13"/><rect x="1900.500" y="150.500" width="14" height="13"/><rect x="1900.500" y="173.500" width="14" height="13"/>
<rect x="1903.500" y="195.500" width="12" height="9"/><rect x="1900.500" y="198.500" width="12" height="10"/>
<rect x="1900.500" y="220.500" width="14" height="13"/><rect x="1900.500" y="243.500" width="14" height="13"/><rect x="1900.500" y="266.500" width="14" height="13"/><rect x="1900.500" y="289.500" width="14" height="13"/><rect x="1900.500" y="312.500" width="14" height="13" rx="3" stroke="#1a7a5a"/><rect x="1900.500" y="335.500" width="14" height="12"/>
<rect x="1900.500" y="366.500" width="14" height="13"/>
<rect x="1900.500" y="489.500" width="14" height="13"/><rect x="1900.500" y="511.500" width="14" height="13"/>
</g>
<path d="M1902 107h4M1902 110h4M1902 113h4" stroke="#2a9a2a"/><path d="M1907 107h6M1907 110h6" stroke="#e02020"/><circle cx="1910" cy="114" r="2.500" fill="none" stroke="#888"/>
<path d="M1902 130h11M1902 133.500h11M1902 137h11" stroke="#c02020" stroke-width="1.500" stroke-dasharray="2.500 1"/>
<path d="M1902 160l3-3 3 2 5-5" fill="none" stroke="#e02020"/>
<path d="M1904 176v8M1908 175v9M1912 176v8" stroke="#222"/><path d="M1903 178h2v4h-2z" fill="#0a0"/><path d="M1907 177h2v5h-2z" fill="#e02020"/><path d="M1911 177h2v4h-2z" fill="#0a0"/>
<path d="M1902 202h9M1902 205h9" stroke="#2a6fd8"/>
<text x="1907.500" y="227" class="t" style="fill:#0a3a9a;font-size:10px;font-weight:bold">F10</text>
<path d="M1903 245h4v3h-4zM1908 249h5v3h-5zM1903 252h4v3h-4z" fill="#f0c020"/>
<text x="1907.500" y="273" class="t" style="fill:#e06010;font-size:11px;font-weight:bold">自</text>
<text x="1907.500" y="296" class="t" style="fill:#0a3a9a;font-size:10px;font-weight:bold">F12</text>
<text x="1907.500" y="319" class="t" style="fill:#0a5a4a;font-size:9px;font-style:italic">f(x)</text>
<circle cx="1907.500" cy="341.500" r="3.500" fill="none" stroke="#2a6fd8" stroke-width="1.500"/>
<rect x="1897" y="356" width="21" height="1" fill="#aaa"/>
<path d="M1902 370l3-2 3 2 3-2 3 2M1902 375l3-2 3 2 3-2 3 2" fill="none" stroke="#d02020"/>
<text x="1907.500" y="395" class="t b" style="fill:#2030c0;font-size:10.500px" textLength="15">RSI</text>
<text x="1907.500" y="418" class="t b" style="fill:#c02020;font-size:17px">S</text>
<path d="M1908 434l3 3h-2v3.500h3.500v-2l3 3-3 3v-2H1909v3.500h2l-3 3-3-3h2V443.500h-3.500v2l-3-3 3-3v2H1907V437h-2z" fill="#0a3ab0"/>
<path d="M1901 470l2-5 9-9 3 3-9 9z" fill="#e8a030" stroke="#805020" stroke-width=".6"/>
<rect x="1897" y="479" width="21" height="1" fill="#aaa"/>
<text x="1907.500" y="496" class="t" style="fill:#0a3a9a;font-size:10px;font-weight:bold">F5</text>
<path d="M1903 518a5 4 0 0 1 9-1M1912 519a5 4 0 0 1-9 1" fill="none" stroke="#2aa02a" stroke-width="2"/>
<rect x="1897" y="645" width="23" height="25" fill="#fff" stroke="#aaa"/>
<text x="1907.500" y="541" class="sb">1</text><text x="1907.500" y="564" class="sb">5</text><text x="1907.500" y="587" class="sb">15</text><text x="1907.500" y="610" class="sb">30</text><text x="1907.500" y="633" class="sb">60</text><text x="1907.500" y="657.500" class="sb">日</text><text x="1907.500" y="680" class="sb">周</text><text x="1907.500" y="703" class="sb">月</text><text x="1907.500" y="725" class="sb">N</text><text x="1907.500" y="748" class="sb">多</text><text x="1907.500" y="771" class="sb">季</text><text x="1907.500" y="794" class="sb">年</text>

<!-- popup -->
<rect x="316" y="87" width="376" height="220" fill="#d8d8d8"/>
<rect x="316" y="87" width="376" height="22" fill="#484e5e"/>
<rect x="317" y="109" width="374" height="171" fill="#000"/>
<rect x="317" y="280" width="374" height="26" fill="#f0f0f0"/>
<text x="321" y="97.500" style="fill:#ccd" textLength="212" lengthAdjust="spacingAndGlyphs" font-size="13">条件预警[运行中] 总品种数:3913 条数:8</text>
<text x="543" y="97.500" style="fill:#ccd" textLength="43" lengthAdjust="spacing">&gt;&gt;&gt;&gt;&gt;&gt;</text>
<path d="M677 91l9 10M686 91l-9 10" stroke="#aab"/>
<g fill="none" stroke="#e8e800" stroke-width="1.500"><path d="M323 120l3.500-3.500 3.500 3.500M323 123.500l3.500-3.500 3.500 3.500M323 137.500l3.500-3.500 3.500 3.500M323 141l3.500-3.500 3.500 3.500M323 154l3.500-3.500 3.500 3.500M323 157.500l3.500-3.500 3.500 3.500M323 171l3.500-3.500 3.500 3.500M323 174.500l3.500-3.500 3.500 3.500M323 188l3.500-3.500 3.500 3.500M323 191.500l3.500-3.500 3.500 3.500M323 205l3.500-3.500 3.500 3.500M323 208.500l3.500-3.500 3.500 3.500M323 222l3.500-3.500 3.500 3.500M323 225.500l3.500-3.500 3.500 3.500M323 239l3.500-3.500 3.500 3.500M323 242.500l3.500-3.500 3.500 3.500"/></g>
<text x="337" y="119" class="p">联合化学</text><text x="421" y="119" class="pm" textLength="31">13:35</text><text x="471" y="119" class="pm" textLength="36">111.00</text><text x="570" y="119" class="pm e">1.65%</text><text x="595" y="119" class="p">共振平台-自</text>
<text x="337" y="136" class="p">视觉中国</text><text x="421" y="136" class="pm" textLength="31">12:37</text><text x="471" y="136" class="pm" textLength="30">24.62</text><text x="570" y="136" class="pm e">7.94%</text><text x="595" y="136" class="p">共振平台-自</text>
<text x="337" y="153" class="p">利欧股份</text><text x="421" y="153" class="pm" textLength="31">12:37</text><text x="471" y="153" class="pm" textLength="24">5.64</text><text x="570" y="153" class="pm e">9.94%</text><text x="595" y="153" class="p">龙头平台...</text>
<text x="337" y="170" class="p">利欧股份</text><text x="421" y="170" class="pm" textLength="31">12:37</text><text x="471" y="170" class="pm" textLength="24">5.64</text><text x="570" y="170" class="pm e">9.94%</text><text x="595" y="170" class="p">共振平台-自</text>
<text x="337" y="187" class="p">中创物流</text><text x="421" y="187" class="pm" textLength="31">12:35</text><text x="471" y="187" class="pm" textLength="30">13.73</text><text x="570" y="187" class="pm e">10.02%</text><text x="595" y="187" class="p">龙头平台...</text>
<text x="337" y="204" class="p">中创物流</text><text x="421" y="204" class="pm" textLength="31">12:35</text><text x="471" y="204" class="pm" textLength="30">13.73</text><text x="570" y="204" class="pm e">10.02%</text><text x="595" y="204" class="p">共振平台</text>
<text x="337" y="221" class="p">顺控发展</text><text x="421" y="221" class="pm" textLength="31">12:35</text><text x="471" y="221" class="pm" textLength="30">15.93</text><text x="570" y="221" class="pm e">10.01%</text><text x="595" y="221" class="p">龙头平台...</text>
<text x="337" y="238" class="p">桂冠电力</text><text x="421" y="238" class="pm" textLength="31">12:34</text><text x="471" y="238" class="pm" textLength="24">7.89</text><text x="570" y="238" class="pm e">3.95%</text><text x="595" y="238" class="p">共振平台-自</text>
<g fill="#f4f4f4" stroke="#666"><rect x="322.500" y="282.500" width="55" height="20"/><rect x="531.500" y="282.500" width="47" height="20"/><rect x="584.500" y="282.500" width="47" height="20"/><rect x="637.500" y="282.500" width="47" height="20"/></g>
<text x="350" y="292.500" class="t" style="fill:#111">关闭预警</text><text x="555" y="292.500" class="t" style="fill:#111">操作V</text><text x="608" y="292.500" class="t" style="fill:#111">分析</text><text x="661" y="292.500" class="t" style="fill:#111">设置</text>
</svg>
<!-- tick columns -->
<div class="col" style="left:1718px;color:#00e000">38.15
38.15
38.16
38.15
38.16
38.18
38.17
38.15
38.17
38.16
38.16
38.15
38.15
38.17
38.15
38.15
38.16
38.17
38.17
38.18
38.18
38.20
38.18
38.18
38.20
38.21
38.21
38.18</div>
<div class="col" style="left:1794px;width:40px;text-align:right;color:#c8c800">7
5
35
5
20
30
31
14
6
1
33
2
49
8
1
13
15
13
11
1
4
9
4
6
19
1
7
243</div>
<div class="col" style="left:1852px;color:#00e000">S
S
<span style="color:#ff3030">B</span>
S
S
<span style="color:#ff3030">B</span>

S
<span style="color:#ff3030">B</span>

S
S
S
<span style="color:#ff3030">B</span>
S
S
S
<span style="color:#ff3030">B</span>
<span style="color:#ff3030">B</span>
<span style="color:#ff3030">B</span>
<span style="color:#ff3030">B</span>
<span style="color:#ff3030">B</span>
S
S
<span style="color:#ff3030">B</span>
<span style="color:#ff3030">B</span>
<span style="color:#ff3030">B</span>
</div>
<div class="col" style="left:1862px;width:31px;text-align:right;color:#a0a0a0">4
2
5
2
8
5
4
8
4
1
6
2
8
4
1
5
5
7
1
1
4
7
3
4
10
1
1
63</div>
</body></html>
